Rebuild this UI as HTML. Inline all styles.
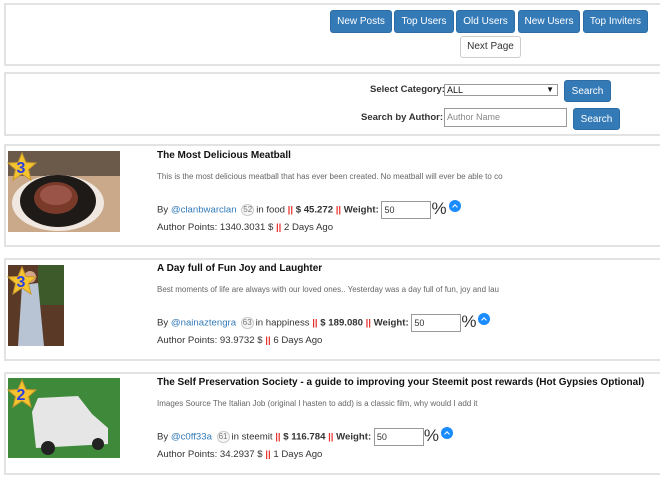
<!DOCTYPE html><html><head><style>
*{margin:0;padding:0;box-sizing:border-box}
body{width:660px;height:480px;background:#fff;font-family:"Liberation Sans",Arial,sans-serif;font-size:9.6px;color:#333;position:relative;overflow:hidden}
.a{position:absolute;white-space:nowrap}
.box{position:absolute;left:4px;width:700px;border:2px solid #e3e3e3}
.btn{position:absolute;background:#337ab7;color:#fff;border:1px solid #2e6da4;border-radius:3px;font-size:10px;text-align:center;line-height:22px}
.np{position:absolute;background:#fff;border:1px solid #ccc;border-radius:3px;font-size:10px;text-align:center;line-height:20px;color:#333}
.img{position:absolute}
.t{font-weight:bold;color:#111;font-size:10px}
.d{font-size:8px;color:#666}
.bl a{color:#337ab7}
.r{color:#e9322d;font-weight:bold}
.b{font-weight:bold}
.badge{display:inline-block;border:1px solid #ccc;border-radius:6px;font-size:8px;color:#777;padding:0 1px;background:#f5f5f5;margin:0 2px;line-height:10px;vertical-align:middle}
.w{display:inline-block;width:50px;height:18px;border:1px solid #999;vertical-align:middle;font-size:9px;padding:2px;line-height:12px}
.pc{font-size:17px;vertical-align:top;line-height:16px}
.up{display:inline-block;width:12px;height:12px;border-radius:50%;background:#1a8cff;vertical-align:top;margin-left:2px;position:relative;top:-1px}
.up:after{content:"";position:absolute;left:4px;top:4.5px;width:3px;height:3px;border-left:1.5px solid #fff;border-top:1.5px solid #fff;transform:rotate(45deg)}
.star{position:absolute}
</style></head><body>
<div class="box" style="top:3px;height:63px"></div>
<div class="btn" style="left:330px;top:10px;width:62px;height:23px">New Posts</div>
<div class="btn" style="left:394px;top:10px;width:60px;height:23px">Top Users</div>
<div class="btn" style="left:456px;top:10px;width:59px;height:23px">Old Users</div>
<div class="btn" style="left:518px;top:10px;width:62px;height:23px">New Users</div>
<div class="btn" style="left:583px;top:10px;width:65px;height:23px">Top Inviters</div>
<div class="np" style="left:460px;top:36px;width:61px;height:22px">Next Page</div>

<div class="box" style="top:72px;height:64px"></div>
<div class="a b" style="left:370px;top:84px;font-size:9.5px;color:#333">Select Category:</div>
<div class="a" style="left:444px;top:84px;width:114px;height:12px;border:1px solid #999;font-size:9px;line-height:10px;padding-left:2px;color:#111">ALL<span style="position:absolute;right:3px;font-size:8px">▼</span></div>
<div class="btn" style="left:564px;top:80px;width:47px;height:22px">Search</div>
<div class="a b" style="left:361px;top:112px;font-size:9.5px">Search by Author:</div>
<div class="a" style="left:444px;top:108px;width:123px;height:19px;border:1px solid #999;font-size:9px;line-height:17px;padding-left:2px;color:#888">Author Name</div>
<div class="btn" style="left:573px;top:108px;width:47px;height:22px">Search</div>

<!-- post1 -->
<div class="box" style="top:144px;height:103px"></div>
<svg class="img" style="left:8px;top:151px" width="112" height="81"><rect width="112" height="81" fill="#c9a98a"/><rect width="112" height="25" fill="#6b5a4a"/><ellipse cx="50" cy="52" rx="46" ry="28" fill="#f0e8e0"/><ellipse cx="50" cy="50" rx="38" ry="26" fill="#1e1a18"/><ellipse cx="48" cy="47" rx="22" ry="16" fill="#7a3a2a"/><ellipse cx="48" cy="44" rx="16" ry="10" fill="#9a5548"/></svg>
<svg class="star" style="left:7px;top:152px" width="30" height="30"><polygon points="15,1 19,10.5 29,11 21.5,17.5 24,28 15,22 6,28 8.5,17.5 1,11 11,10.5" fill="#f4c430" stroke="#c9962a"/><text x="14" y="21" font-size="16" font-weight="bold" fill="#2a3fe0" text-anchor="middle" font-family="Liberation Sans">3</text></svg>
<div class="a t" style="left:157px;top:150px">The Most Delicious Meatball</div>
<div class="a d" style="left:157px;top:172px">This is the most delicious meatball that has ever been created. No meatball will ever be able to co</div>
<div class="a bl" style="left:157px;top:201px;line-height:18px">By <a>@clanbwarclan</a> <span class="badge">52</span>in food <span class="r">||</span> <span class="b">$ 45.272</span> <span class="r">||</span> <span class="b">Weight:</span> <span class="w">50</span><span class="pc">%</span><span class="up"></span></div>
<div class="a" style="left:157px;top:222px">Author Points: 1340.3031 $ <span class="r">||</span> 2 Days Ago</div>

<!-- post2 -->
<div class="box" style="top:258px;height:103px"></div>
<svg class="img" style="left:8px;top:265px" width="56" height="81"><rect width="56" height="81" fill="#5a3a26"/><rect x="30" width="26" height="40" fill="#3d5a2a"/><path d="M14 20 L30 18 L36 81 L10 81 Z" fill="#b8c4d4"/><circle cx="22" cy="12" r="6" fill="#d4a58a"/></svg>
<svg class="star" style="left:7px;top:266px" width="30" height="30"><polygon points="15,1 19,10.5 29,11 21.5,17.5 24,28 15,22 6,28 8.5,17.5 1,11 11,10.5" fill="#f4c430" stroke="#c9962a"/><text x="14" y="21" font-size="16" font-weight="bold" fill="#2a3fe0" text-anchor="middle" font-family="Liberation Sans">3</text></svg>
<div class="a t" style="left:157px;top:263px">A Day full of Fun Joy and Laughter</div>
<div class="a d" style="left:157px;top:285px">Best moments of life are always with our loved ones.. Yesterday was a day full of fun, joy and lau</div>
<div class="a bl" style="left:157px;top:314px;line-height:18px">By <a>@nainaztengra</a> <span class="badge">63</span>in happiness <span class="r">||</span> <span class="b">$ 189.080</span> <span class="r">||</span> <span class="b">Weight:</span> <span class="w">50</span><span class="pc">%</span><span class="up"></span></div>
<div class="a" style="left:157px;top:335px">Author Points: 93.9732 $ <span class="r">||</span> 6 Days Ago</div>

<!-- post3 -->
<div class="box" style="top:372px;height:103px"></div>
<svg class="img" style="left:8px;top:378px" width="112" height="80"><rect width="112" height="80" fill="#3f8a3a"/><path d="M30 20 L70 18 L84 36 L100 50 L100 66 L28 70 L24 34 Z" fill="#e6e6e6"/><circle cx="40" cy="70" r="7" fill="#222"/><circle cx="90" cy="66" r="6" fill="#222"/></svg>
<svg class="star" style="left:7px;top:379px" width="30" height="30"><polygon points="15,1 19,10.5 29,11 21.5,17.5 24,28 15,22 6,28 8.5,17.5 1,11 11,10.5" fill="#f4c430" stroke="#c9962a"/><text x="14" y="21" font-size="16" font-weight="bold" fill="#2a3fe0" text-anchor="middle" font-family="Liberation Sans">2</text></svg>
<div class="a t" style="left:157px;top:377px">The Self Preservation Society - a guide to improving your Steemit post rewards (Hot Gypsies Optional)</div>
<div class="a d" style="left:157px;top:399px">Images Source The Italian Job (original I hasten to add) is a classic film, why would I add it</div>
<div class="a bl" style="left:157px;top:428px;line-height:18px">By <a>@c0ff33a</a> <span class="badge">61</span>in steemit <span class="r">||</span> <span class="b">$ 116.784</span> <span class="r">||</span> <span class="b">Weight:</span> <span class="w">50</span><span class="pc">%</span><span class="up"></span></div>
<div class="a" style="left:157px;top:449px">Author Points: 34.2937 $ <span class="r">||</span> 1 Days Ago</div>
</body></html>
